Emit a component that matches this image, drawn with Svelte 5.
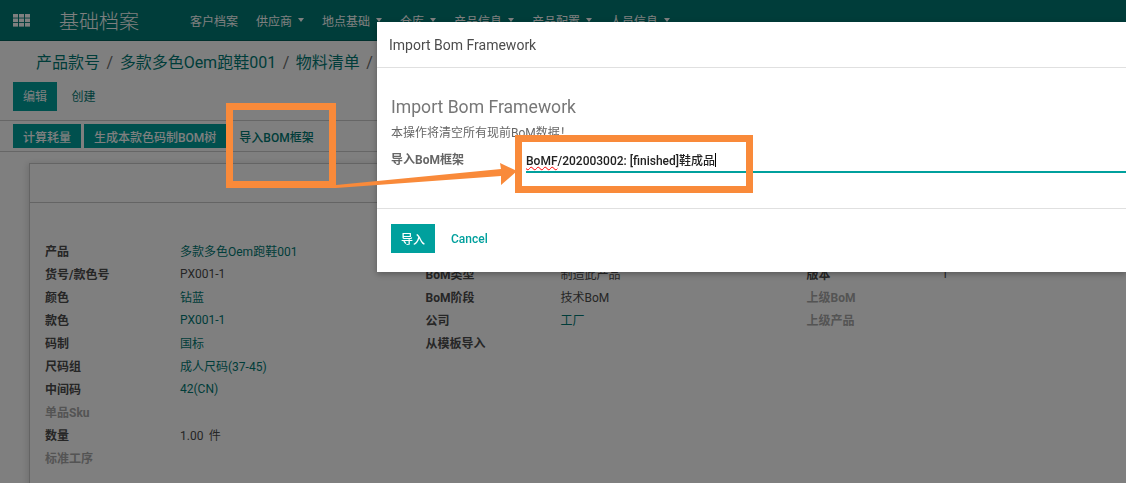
<script>
  const menu = [
    { name: '客户档案' },
    { name: '供应商', caret: true },
    { name: '地点基础', caret: true },
    { name: '仓库', caret: true },
    { name: '产品信息', caret: true },
    { name: '产品配置', caret: true },
    { name: '人员信息', caret: true }
  ];

  const col1 = [
    { label: '产品', value: '多款多色Oem跑鞋001', link: true },
    { label: '货号/款色号', value: 'PX001-1' },
    { label: '颜色', value: '钻蓝', link: true },
    { label: '款色', value: 'PX001-1', link: true },
    { label: '码制', value: '国标', link: true },
    { label: '尺码组', value: '成人尺码(37-45)', link: true },
    { label: '中间码', value: '42(CN)', link: true },
    { label: '单品Sku', muted: true },
    { label: '数量', value: '1.00\u00a0\u2009件' },
    { label: '标准工序', muted: true }
  ];
  const col2 = [
    { label: '', value: '' },
    { label: 'BoM类型', value: '制造此产品' },
    { label: 'BoM阶段', value: '技术BoM' },
    { label: '公司', value: '工厂', link: true },
    { label: '从模板导入' }
  ];
  const col3 = [
    { label: '', value: '' },
    { label: '版本', value: '1' },
    { label: '上级BoM', muted: true },
    { label: '上级产品', muted: true }
  ];
  const columns = [col1, col2, col3];
</script>

<div class="page">
  <header class="navbar">
    <svg class="apps" width="17" height="13" viewBox="0 0 17 13">
      {#each [0, 1, 2] as r}
        {#each [0, 1, 2] as c}
          <rect x={c * 6} y={r * 4.5} width="5" height="3.6" fill="#fff" />
        {/each}
      {/each}
    </svg>
    <span class="brand">基础档案</span>
    <nav class="menu">
      {#each menu as item}
        <span class="menu-item">{item.name}{#if item.caret}<i class="caret"></i>{/if}</span>
      {/each}
    </nav>
  </header>

  <div class="control">
    <div class="breadcrumb">
      <span class="crumb">产品款号</span><span class="sep">/</span><span class="crumb">多款多色Oem跑鞋001</span><span class="sep">/</span><span class="crumb">物料清单</span><span class="sep">/</span>
    </div>
    <div class="actions">
      <button class="btn primary">编辑</button>
      <button class="btn link">创建</button>
    </div>
  </div>

  <div class="statusbar">
    <button class="btn primary small">计算耗量</button>
    <button class="btn primary small">生成本款色码制BOM树</button>
    <button class="btn link small">导入BOM框架</button>
  </div>

  <div class="sheet-bg">
    <div class="sheet">
      <div class="sheet-head"></div>
      <div class="groups">
        {#each columns as col}
          <div class="group">
            {#each col as row}
              <div class="row">
                <span class="label" class:muted={row.muted}>{row.label}</span>
                <span class="value" class:link-text={row.link}>{row.value ?? ''}</span>
              </div>
            {/each}
          </div>
        {/each}
      </div>
    </div>
  </div>
</div>

<div class="backdrop"></div>

<div class="modal">
  <div class="modal-header">Import Bom Framework</div>
  <div class="modal-body">
    <h2>Import Bom Framework</h2>
    <p>本操作将清空所有现前BoM数据！</p>
    <div class="field">
      <span class="field-label">导入BoM框架</span>
      <div class="input"><span class="squiggle">BoMF</span>/202003002: [finished]鞋成品<i class="cursor"></i></div>
    </div>
  </div>
  <div class="modal-footer">
    <button class="btn teal">导入</button>
    <button class="btn cancel">Cancel</button>
  </div>
</div>

<div class="mark mark-a"></div>
<div class="mark mark-b"></div>
<svg class="arrow" width="1126" height="483" viewBox="0 0 1126 483">
  <polygon points="336,185 501,169 500,163 517,171 501,185 501,176 336,188" fill="#f98a3a" />
</svg>

<style>
  :global(body) {
    margin: 0;
    overflow: hidden;
    background: #fff;
    font-family: Roboto, "Noto Sans CJK SC", sans-serif;
    font-size: 12px;
    color: #4c4c4c;
  }

  .page {
    height: 483px;
    display: flex;
    flex-direction: column;
    overflow: hidden;
  }

  .navbar {
    height: 40px;
    flex: none;
    display: flex;
    align-items: center;
    background: #007a74;
    border-bottom: 1px solid #00605b;
    color: #fff;
    padding-left: 13px;
  }
  .apps { flex: none; }
  .brand {
    font-size: 20px;
    font-weight: 300;
    margin-left: 29px;
    width: 131px;
    flex: none;
  }
  .menu { display: flex; gap: 18px; white-space: nowrap; }
  .menu-item { font-size: 12px; display: flex; align-items: center; }
  .caret {
    width: 0;
    height: 0;
    margin-left: 6px;
    border-left: 3.5px solid transparent;
    border-right: 3.5px solid transparent;
    border-top: 4px solid #fff;
  }

  .control {
    height: 79px;
    flex: none;
    border-bottom: 1px solid #ccc;
    padding-left: 13px;
  }
  .breadcrumb {
    font-size: 16px;
    padding: 8px 0 0 23px;
    height: 33px;
    color: #007a74;
    white-space: nowrap;
  }
  .sep { color: #6c6c6c; margin: 0 6.5px; }
  .actions { display: flex; height: 29px; }

  .btn {
    border: none;
    font-family: inherit;
    font-size: 12px;
    background: none;
    padding: 0;
  }
  .primary { background: #00a09d; color: #fff; }
  .primary:not(.small) { width: 44px; }
  .actions .btn { padding-bottom: 3px; }
  .link { color: #007a74; }
  .actions .link { width: 51px; text-align: center; margin-left: 1px; }

  .statusbar {
    height: 27px;
    flex: none;
    border-bottom: 1px solid #ccc;
    display: flex;
    align-items: flex-start;
    gap: 3px;
    padding: 3px 0 0 13px;
  }
  .small { height: 24px; font-weight: 500; padding: 0 10px; }

  .sheet-bg {
    flex: 1;
    background: #fff;
    padding: 11px 0 0 29px;
  }
  .sheet {
    border: 1px solid #c8c8c8;
    border-right: none;
    box-shadow: -2px 0 6px rgba(0, 0, 0, 0.12);
    height: 400px;
  }
  .sheet-head { height: 38px; border-bottom: 1px solid #c8c8c8; }
  .groups {
    display: grid;
    grid-template-columns: 380.5px 381px 1fr;
    padding: 36px 0 0 15px;
  }
  .row { display: flex; height: 23px; align-items: center; }
  .label { width: 135px; flex: none; font-weight: 700; color: #4c4c4c; }
  .label.muted { color: #a8a8a8; }
  .value { color: #4c4c4c; }
  .link-text { color: #007a74; }

  .backdrop {
    position: fixed;
    inset: 0;
    background: rgba(0, 0, 0, 0.5);
  }

  .modal {
    position: absolute;
    left: 377px;
    top: 22px;
    right: 0;
    height: 250px;
    background: #fff;
    box-shadow: 0 2px 6px rgba(0, 0, 0, 0.3);
    display: flex;
    flex-direction: column;
  }
  .modal-header {
    height: 46px;
    flex: none;
    box-sizing: border-box;
    border-bottom: 1px solid #e0e0e0;
    padding-left: 12px;
    display: flex;
    align-items: center;
    font-size: 14px;
    color: #4c4c4c;
  }
  .modal-body { height: 141px; flex: none; padding: 28px 0 0 14px; box-sizing: border-box; border-bottom: 1px solid #e0e0e0; }
  h2 {
    margin: 0;
    font-size: 17.6px;
    font-weight: 400;
    line-height: 22px;
    color: #777;
  }
  p {
    margin: 6px 0 0;
    font-size: 12px;
    line-height: 18px;
    color: #666;
  }
  .field { display: flex; margin-top: 9px; }
  .field-label { width: 135px; flex: none; font-weight: 700; color: #666; line-height: 18px; }
  .input {
    flex: 1;
    height: 20px;
    font-size: 12px;
    font-weight: 500;
    line-height: 20px;
    color: #222;
    border-bottom: 2px solid #00a09d;
    white-space: nowrap;
  }
  .squiggle { text-decoration: underline wavy #ff0000 1px; text-underline-offset: 1px; }
  .cursor {
    display: inline-block;
    width: 1px;
    height: 14px;
    background: #000;
    vertical-align: -2px;
  }
  .modal-footer { display: flex; align-items: center; padding: 15px 0 0 14px; }
  .teal { width: 44px; height: 29px; background: #00a09d; color: #fff; font-weight: 500; }
  .cancel { color: #00a09d; font-weight: 500; margin-left: 16px; }

  .mark {
    position: absolute;
    box-sizing: border-box;
    border: 7px solid #f98a3a;
  }
  .mark-a { left: 226px; top: 103px; width: 110px; height: 85px; }
  .mark-b { left: 515px; top: 135px; width: 238px; height: 58px; }
  .arrow { position: absolute; left: 0; top: 0; pointer-events: none; }
</style>
